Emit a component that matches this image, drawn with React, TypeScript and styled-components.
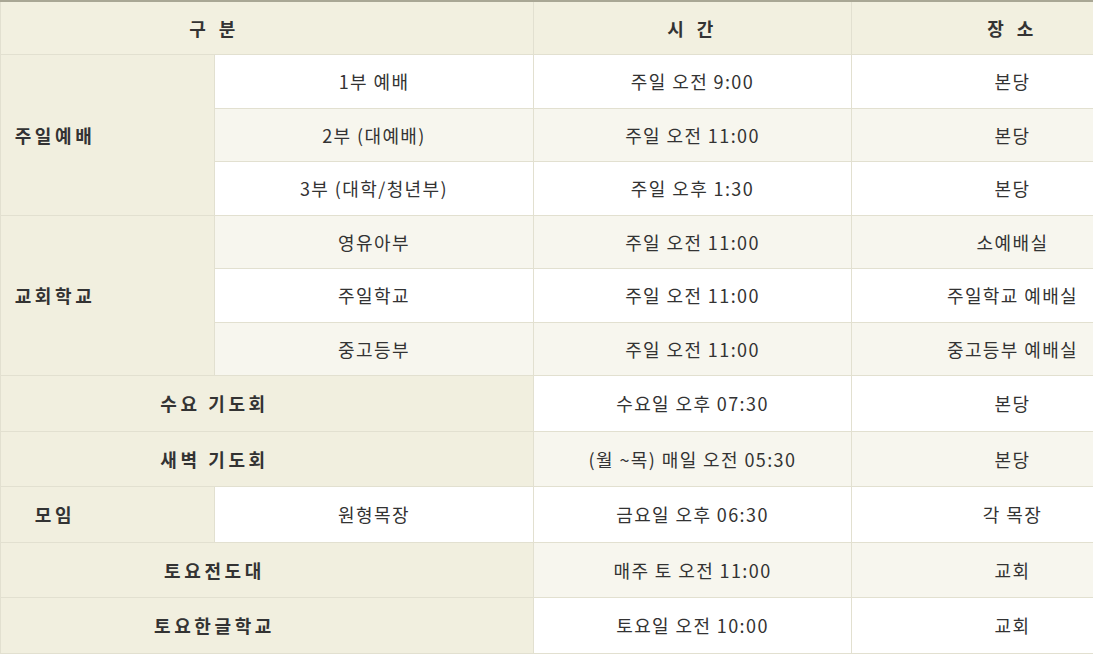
import styled, { createGlobalStyle } from "styled-components";

const GlobalStyle = createGlobalStyle`
  html, body {
    margin: 0;
    padding: 0;
    background: #ffffff;
    overflow: hidden;
  }
  body {
    font-family: "Noto Sans CJK KR", "Noto Sans", sans-serif;
    color: #333333;
  }
`;

const Table = styled.table`
  width: 1173px;
  table-layout: fixed;
  border-collapse: collapse;
  border-top: 2px solid #a9a795;
  font-size: 18px;
`;

const HeadCell = styled.th<{ $merged?: boolean }>`
  height: 52px;
  padding: 0 ${(p) => (p.$merged ? "105px" : "0")} 0 0;
  background: #f2f0e0;
  border: 1px solid #e2e0d0;
  border-top: none;
  font-weight: 700;
  letter-spacing: 4.5px;
  text-align: center;
`;

const Cell = styled.td`
  padding: 0;
  background: #ffffff;
  border: 1px solid #e2e0d0;
  text-align: center;
  letter-spacing: 1.4px;
  white-space: nowrap;
`;

const Row = styled.tr<{ $tall?: boolean }>`
  height: ${(p) => (p.$tall ? "55.5px" : "53.5px")};
  &:nth-child(even) ${Cell} {
    background: #f7f6ee;
  }
`;

const Label = styled.td`
  padding: 0 105px 0 0;
  background: #f1efdf;
  border: 1px solid #e2e0d0;
  font-weight: 700;
  letter-spacing: 3.6px;
  text-align: center;
  white-space: nowrap;
`;

type Item = { sub?: string; time: string; place: string };

const groups: { label: string; items: Item[] }[] = [
  {
    label: "주일예배",
    items: [
      { sub: "1부 예배", time: "주일 오전 9:00", place: "본당" },
      { sub: "2부 (대예배)", time: "주일 오전 11:00", place: "본당" },
      { sub: "3부 (대학/청년부)", time: "주일 오후 1:30", place: "본당" },
    ],
  },
  {
    label: "교회학교",
    items: [
      { sub: "영유아부", time: "주일 오전 11:00", place: "소예배실" },
      { sub: "주일학교", time: "주일 오전 11:00", place: "주일학교 예배실" },
      { sub: "중고등부", time: "주일 오전 11:00", place: "중고등부 예배실" },
    ],
  },
  {
    label: "수요 기도회",
    items: [{ time: "수요일 오후 07:30", place: "본당" }],
  },
  {
    label: "새벽 기도회",
    items: [{ time: "(월 ~목) 매일 오전 05:30", place: "본당" }],
  },
  {
    label: "모임",
    items: [{ sub: "원형목장", time: "금요일 오후 06:30", place: "각 목장" }],
  },
  {
    label: "토요전도대",
    items: [{ time: "매주 토 오전 11:00", place: "교회" }],
  },
  {
    label: "토요한글학교",
    items: [{ time: "토요일 오전 10:00", place: "교회" }],
  },
];

export default function App() {
  return (
    <>
      <GlobalStyle />
      <Table>
        <colgroup>
          <col style={{ width: 214 }} />
          <col style={{ width: 319 }} />
          <col style={{ width: 318 }} />
          <col style={{ width: 322 }} />
        </colgroup>
        <thead>
          <tr>
            <HeadCell colSpan={2} $merged>
              구 분
            </HeadCell>
            <HeadCell>시 간</HeadCell>
            <HeadCell>장 소</HeadCell>
          </tr>
        </thead>
        <tbody>
          {groups.flatMap((g) =>
            g.items.map((it, i) => (
              <Row key={g.label + i} $tall={g.items.length === 1}>
                {i === 0 && (
                  <Label rowSpan={g.items.length} colSpan={it.sub ? 1 : 2}>
                    {g.label}
                  </Label>
                )}
                {it.sub && <Cell>{it.sub}</Cell>}
                <Cell>{it.time}</Cell>
                <Cell>{it.place}</Cell>
              </Row>
            ))
          )}
        </tbody>
      </Table>
    </>
  );
}
